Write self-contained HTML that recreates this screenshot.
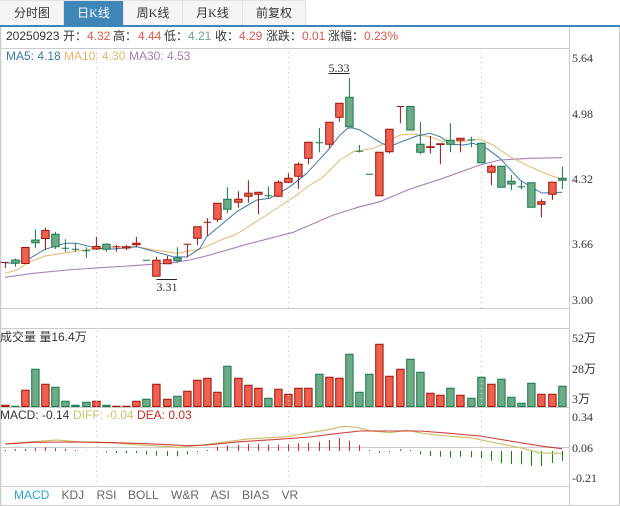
<!DOCTYPE html>
<html><head><meta charset="utf-8"><style>
html,body{margin:0;padding:0;background:#fff;width:620px;height:506px;overflow:hidden}
svg{position:absolute;left:0;top:0;display:block}
text{font-size:12px;font-family:"Liberation Sans","Noto Sans CJK SC",sans-serif;fill:#333}
.s{font-family:"Liberation Serif","Noto Sans CJK SC",serif}
.g{fill:#6ba884}.r{fill:#e0574b}
.l{fill:none;stroke-linejoin:round}
</style></head><body>
<svg width="620" height="506" viewBox="0 0 620 506">
<!-- tabs -->
<rect x="0" y="0" width="305.5" height="25" fill="#f5f5f5"/>
<rect x="64" y="0" width="59" height="25" fill="#3f86b8"/>
<path d="M.5 .5H305.5V25M63.5 0V25M182.5 0V25M242.5 0V25M123.5 0V25" fill="none" stroke="#e2e2e2"/>
<text class="s" x="32" y="17" text-anchor="middle">分时图</text>
<text class="s" x="93.5" y="17" text-anchor="middle" style="fill:#fff">日K线</text>
<text class="s" x="153" y="17" text-anchor="middle">周K线</text>
<text class="s" x="212.500" y="17" text-anchor="middle">月K线</text>
<text class="s" x="274" y="17" text-anchor="middle">前复权</text>
<rect x="0" y="25" width="620" height="2" fill="#3f86b8"/>
<!-- frame -->
<path d="M.5 27V506M569.5 27V505.500M619.5 27V505.500M0 48.500H569M0 308.500H569M0 328.500H569M0 407.500H569M0 447.500H569M0 486.500H569M0 505.500H620" fill="none" stroke="#ccc"/>
<rect x="0" y="27" width="1.300" height="479" fill="#ccc"/>
<!-- dotted -->
<path d="M96.500 52V308M288.500 52V308M481.500 52V308M96.500 331V486M288.500 331V486M481.500 331V486" fill="none" stroke="#c4c4c4" stroke-dasharray="1 4"/>
<!-- info -->
<text x="6" y="40">20250923</text><text x="63" y="40">开：</text><text class="r" x="87" y="40">4.32</text>
<text x="113" y="40">高：</text><text class="r" x="138" y="40">4.44</text>
<text x="164" y="40">低：</text><text class="g" x="188" y="40">4.21</text>
<text x="215" y="40">收：</text><text class="r" x="239" y="40">4.29</text>
<text x="266" y="40">涨跌：</text><text class="r" x="302" y="40">0.01</text>
<text x="328" y="40">涨幅：</text><text class="r" x="364" y="40">0.23%</text>
<text x="6" y="60" style="fill:#3c78a8">MA5: 4.18</text>
<text x="64" y="60" style="fill:#e8b56c">MA10: 4.30</text>
<text x="129" y="60" style="fill:#a67fbb">MA30: 4.53</text>
<!-- axis labels -->
<text class="s" x="572" y="62">5.64</text><text class="s" x="572" y="118">4.98</text><text class="s" x="572" y="183">4.32</text><text class="s" x="572" y="248">3.66</text><text class="s" x="572" y="304">3.00</text>
<text class="s" x="572" y="342">52万</text><text class="s" x="572" y="373">28万</text><text class="s" x="572" y="403">3万</text>
<text class="s" x="572" y="421">0.34</text><text class="s" x="572" y="452">0.06</text><text class="s" x="572" y="482">-0.21</text>
<!-- MA lines -->
<polyline class="l" stroke="#a87fbb" stroke-width="1.100" points="5,277.300 33,273.300 67,270 100,267.700 133,265.700 173,262.700 190,260 210,255 246.700,244.300 293.300,232.300 333.300,215 360,206.700 380,201.700 410,189 440,179.300 480,165 500,160 530,158.300 562.300,157.700"/>
<polyline class="l" stroke="#e8b56c" stroke-width="1" points="5,273.300 16.700,270 30,261.700 45,256 77,251 100,248.300 117,246.700 137,246.700 150,249.300 177,253.300 190,250.700 200,249.300 216.700,241.700 236.700,234 266.700,215 296.700,195 310,185 321.700,178.300 340,160 353.300,151.700 373.300,148.300 380,145.700 400,135 413,134 430,136.700 443,141.700 460,141.700 480,139 493,145 510,156.700 530,166.700 546.700,174 561.700,179.300"/>
<polyline class="l" stroke="#3c78a8" stroke-width="1" points="0,262.300 13,263.300 30,258.300 45,249.300 65,243.300 77,243.300 97,248.300 113,249 137,246.700 173,256.700 187,257 200,248.300 206.700,236.700 236.700,211.700 256.700,200 270,198.300 290,186.700 306.700,173.300 326.700,151.700 340,135 348,128 353,128 360,130 380,142.300 389.300,146.700 400,142.300 416.700,136 430,133.300 440,136.700 451.700,144.300 463.300,145 473.300,143.300 486.700,148.300 500,158.300 520,180 533.300,188.300 541.700,193 562.300,192.300"/>
<!-- candles red -->
<path fill="#f0604e" stroke="#a0120a" d="M5.400 262.500V268M1.500 262.500h7M21.700 247.500h7.400v16h-7.400zM41.700 230.500h7.400v8h-7.400zM45.400 227.500v3M45.400 238.500V250M92.700 246.500h7.400v2.500h-7.400zM96.400 236.700v9.800M96.400 249v1M112.700 246.700h7.400M116.400 245V251.700M122.700 246.700h7.400v1.300h-7.400zM126.400 245v1.700M126.400 248v2M132.700 243.300h7.400v1.400h-7.400zM136.400 236.700v6.600M136.400 244.700v2.600M152.700 260.300h7.400v16h-7.400zM156.400 256.700v3.600M163.700 259.700h7.400v4h-7.400zM167.400 256v3.700M183.700 244.300h7.400M187.400 244.300V257.300M193.700 226.700h7.400v11.600h-7.400zM197.400 238.300V245M203.700 222.300h7.400M207.400 218.300V235.700M213.700 203.300h7.400v16h-7.400zM217.400 219.300v3M234.700 199.300h7.400v3h-7.400zM238.400 191.300v8M238.400 202.300V207.700M244.700 193.300h7.400v3h-7.400zM248.400 180.300v13M248.400 196.300v6.400M254.700 192.300h7.400v2h-7.400zM258.400 194.300V214.300M274.700 182.300h7.400v14h-7.400zM278.400 180.300v2M278.400 196.300v1M284.700 178.300h7.400v4h-7.400zM288.400 173.300v5M288.400 182.300v1M294.700 164.300h7.400v12h-7.400zM298.400 162.300v2M298.400 176.300V188.700M304.700 142.300h7.400v16h-7.400zM308.400 158.300v6M325.700 122.300h7.400v22h-7.400zM329.400 144.300v4M335.700 103.300h7.400v14h-7.400zM339.400 117.300v4.400M375.700 152.300h7.400v43.400h-7.400zM385.700 129.300h7.400v22.400h-7.400zM389.400 151.700v1.600M396.700 106.500h7.400M400.400 106.500V123.300M426.700 146.700h7.400v.8h-7.400zM430.400 136V153.300M436.700 143.700h7.400v.8h-7.400zM440.400 144V164.300M456.700 138.300h7.400v2h-7.400zM460.400 140.300V152.300M487.700 166.300h7.400v6h-7.400zM491.400 164.300v2M491.400 172.300V185M537.700 201.700h7.400v2.600h-7.400zM541.400 199.300v2.400M541.400 204.300V217.300M548.700 182.300h7.400v12h-7.400zM552.400 194.300V200"/>
<!-- candles green -->
<path fill="#6daa86" stroke="#17784c" d="M11.700 260h7.400v3.300h-7.400zM15.400 258.500v1.500M15.400 263.300v3.400M31.700 240h7.400v2.700h-7.400zM35.400 229.300V240M35.400 242.700v5.600M51.700 234.300h7.400v12.400h-7.400zM55.400 231.700v2.600M55.400 246.700V249M61.700 248.300h7.400M65.400 239.300V251.700M71.700 249.300h7.400M75.400 243.300V251.700M82.700 250.700h7.400M86.400 247.300V257.700M102.700 244.300h7.400v5h-7.400zM106.400 243.300v1M106.400 249.300v2.400M142.700 260.300h7.400M173.700 258h7.400v2.700h-7.400zM177.400 247.300V258M177.400 260.700v2M223.700 199.300h7.400v10h-7.400zM227.400 187.300v12M227.400 209.300v4M264.700 195.700h7.400M268.400 186.300V198.300M315.700 142.700h7.400M319.400 128V152.300M345.700 97.300h7.400v29.400h-7.400zM349.400 78.300v19M355.700 151.300h7.400M359.400 145V152.500M365.700 174.300h7.400M406.700 106.500h7.400v23.500h-7.400zM416.700 144.300h7.400v8h-7.400zM420.400 121.700v22.600M420.400 152.300v2M446.700 140.300h7.400v4h-7.400zM450.400 123.300v17M450.400 144.300v8M467.700 140h7.400M471.400 136.700V147.300M477.700 143.300h7.400v19.400h-7.400zM497.700 166.300h7.400v21h-7.400zM507.700 181.300h7.400v2.700h-7.400zM511.400 175v6.300M511.400 184v6M517.700 186.700h7.400M521.400 181V189.300M527.700 182.700h7.400v24.600h-7.400zM558.700 178.300h7.400v2h-7.400zM562.400 166.700v11.600M562.400 180.300V189"/>
<!-- high/low -->
<path d="M328.500 73.500H349.500M156.500 279.500H177" stroke="#222" fill="none"/>
<text class="s" x="328.500" y="72">5.33</text>
<text class="s" x="156.500" y="291">3.31</text>
<!-- volume -->
<text x="0" y="341">成交量 量16.4万</text>
<path fill="#f0604e" stroke="#a0120a" d="M1.700 405.300h7.400V406.500h-7.400zM21.700 390.300h7.400V406.500h-7.400zM41.700 384.300h7.400V406.500h-7.400zM92.700 401.300h7.400V406.500h-7.400zM112.700 406.300h7.400V406.500h-7.400zM122.700 406.300h7.400V406.500h-7.400zM132.700 401.300h7.400V406.500h-7.400zM152.700 384.300h7.400V406.500h-7.400zM163.700 399.300h7.400V406.500h-7.400zM183.700 391.300h7.400V406.500h-7.400zM193.700 380.300h7.400V406.500h-7.400zM203.700 378.300h7.400V406.500h-7.400zM213.700 392.300h7.400V406.500h-7.400zM234.700 378.300h7.400V406.500h-7.400zM244.700 385.300h7.400V406.500h-7.400zM254.700 388.300h7.400V406.500h-7.400zM274.700 389.300h7.400V406.500h-7.400zM284.700 394.300h7.400V406.500h-7.400zM294.700 388.300h7.400V406.500h-7.400zM304.700 388.300h7.400V406.500h-7.400zM325.700 377.300h7.400V406.500h-7.400zM335.700 378.300h7.400V406.500h-7.400zM375.700 344.300h7.400V406.500h-7.400zM385.700 376.300h7.400V406.500h-7.400zM396.700 369.300h7.400V406.500h-7.400zM426.700 393.300h7.400V406.500h-7.400zM436.700 395.300h7.400V406.500h-7.400zM456.700 395.300h7.400V406.500h-7.400zM487.700 384.300h7.400V406.500h-7.400zM537.700 394.300h7.400V406.500h-7.400zM548.700 394.300h7.400V406.500h-7.400z"/>
<path fill="#6daa86" stroke="#17784c" d="M11.700 406.300h7.400V406.500h-7.400zM31.700 369.300h7.400V406.500h-7.400zM51.700 387.300h7.400V406.500h-7.400zM61.700 401.300h7.400V406.500h-7.400zM71.700 405.300h7.400V406.500h-7.400zM82.700 402.300h7.400V406.500h-7.400zM102.700 405.300h7.400V406.500h-7.400zM142.700 399.300h7.400V406.500h-7.400zM173.700 396.300h7.400V406.500h-7.400zM223.700 366.300h7.400V406.500h-7.400zM264.700 398.300h7.400V406.500h-7.400zM315.700 374.300h7.400V406.500h-7.400zM345.700 354.300h7.400V406.500h-7.400zM355.700 392.300h7.400V406.500h-7.400zM365.700 374.300h7.400V406.500h-7.400zM406.700 359.300h7.400V406.500h-7.400zM416.700 372.300h7.400V406.500h-7.400zM446.700 388.300h7.400V406.500h-7.400zM467.700 398.300h7.400V406.500h-7.400zM477.700 377.300h7.400V406.500h-7.400zM497.700 379.300h7.400V406.500h-7.400zM507.700 397.300h7.400V406.500h-7.400zM517.700 403.300h7.400V406.500h-7.400zM527.700 383.300h7.400V406.500h-7.400zM558.700 386.300h7.400V406.500h-7.400z"/>
<path d="M96.500 401V407M288.500 395V407M481.500 378V407" fill="none" stroke="#fff" stroke-dasharray="1 4" opacity=".7"/>
<!-- MACD -->
<text x="0" y="419">MACD: -0.14</text>
<text x="73" y="419" style="fill:#cfc26e">DIFF: -0.04</text>
<text x="137" y="419" style="fill:#c22a22">DEA: 0.03</text>
<path fill="none" stroke="#ee1c1c" d="M5.500 450V451M15.500 449.300V451M25.500 449V451M35.500 448.300V451M45.500 447.300V451M55.500 448.300V451M65.500 449V451M75.500 450V451M86.500 450.500V451M207.500 450V451M217.500 446.700V451M227.500 445.700V451M238.500 445V451M248.500 444V451M258.500 444V451M268.500 444.700V451M278.500 444.700V451M288.500 444.300V451M298.500 443.300V451M308.500 442.700V451M319.500 441.700V451M329.500 440V451M339.500 438.300V451M349.500 440.700V451M359.500 445V451M369.500 450V451M400.500 449.300V451M410.500 450V451"/>
<path fill="none" stroke="#0c8a0c" d="M106.500 451V452.300M116.500 451V453M126.500 451V453.300M136.500 451V453M146.500 451V454.700M156.500 451V455.700M167.500 451V456M177.500 451V456.300M187.500 451V454.300M197.500 451V452M379.500 451V452.700M389.500 451V452M420.500 451V454.300M430.500 451V456M440.500 451V456.700M450.500 451V457.300M460.500 451V456.700M471.500 451V457.300M481.500 451V458.300M491.500 451V460.700M501.500 451V463.300M511.500 451V464M521.500 451V464.300M531.500 451V466M541.500 451V466M552.500 451V463M562.500 451V460.700"/>
<polyline class="l" stroke="#cdbf6a" stroke-width="1.200" points="5,444 33,441.700 57,440 77,441.700 113,442.700 140,445 180,447.300 200,445.300 220,442.700 247,439 287,436.700 310,432.500 327,430 343,426.300 357,427.300 370,430.700 390,432.700 407,430.300 423,433.300 443,435.700 470,437.700 493,442.300 523,448.300 540,453 562,453.300"/>
<polyline class="l" stroke="#c8201c" stroke-width="1.100" stroke-opacity=".85" points="5,444 33,442.300 73,442 113,442.700 147,443.700 187,445.700 207,445 240,441.700 273,439.700 310,437 330,434.300 360,431 393,431 420,431 450,433.300 480,436 510,441 543,446.300 562,448.700"/>
<!-- bottom nav -->
<text x="14" y="499" style="fill:#2aa8d0">MACD</text>
<text x="61.500" y="499" style="fill:#666">KDJ</text>
<text x="96.500" y="499" style="fill:#666">RSI</text>
<text x="128" y="499" style="fill:#666">BOLL</text>
<text x="171" y="499" style="fill:#666">W&amp;R</text>
<text x="210.500" y="499" style="fill:#666">ASI</text>
<text x="242" y="499" style="fill:#666">BIAS</text>
<text x="281.500" y="499" style="fill:#666">VR</text>
</svg>
</body></html>
